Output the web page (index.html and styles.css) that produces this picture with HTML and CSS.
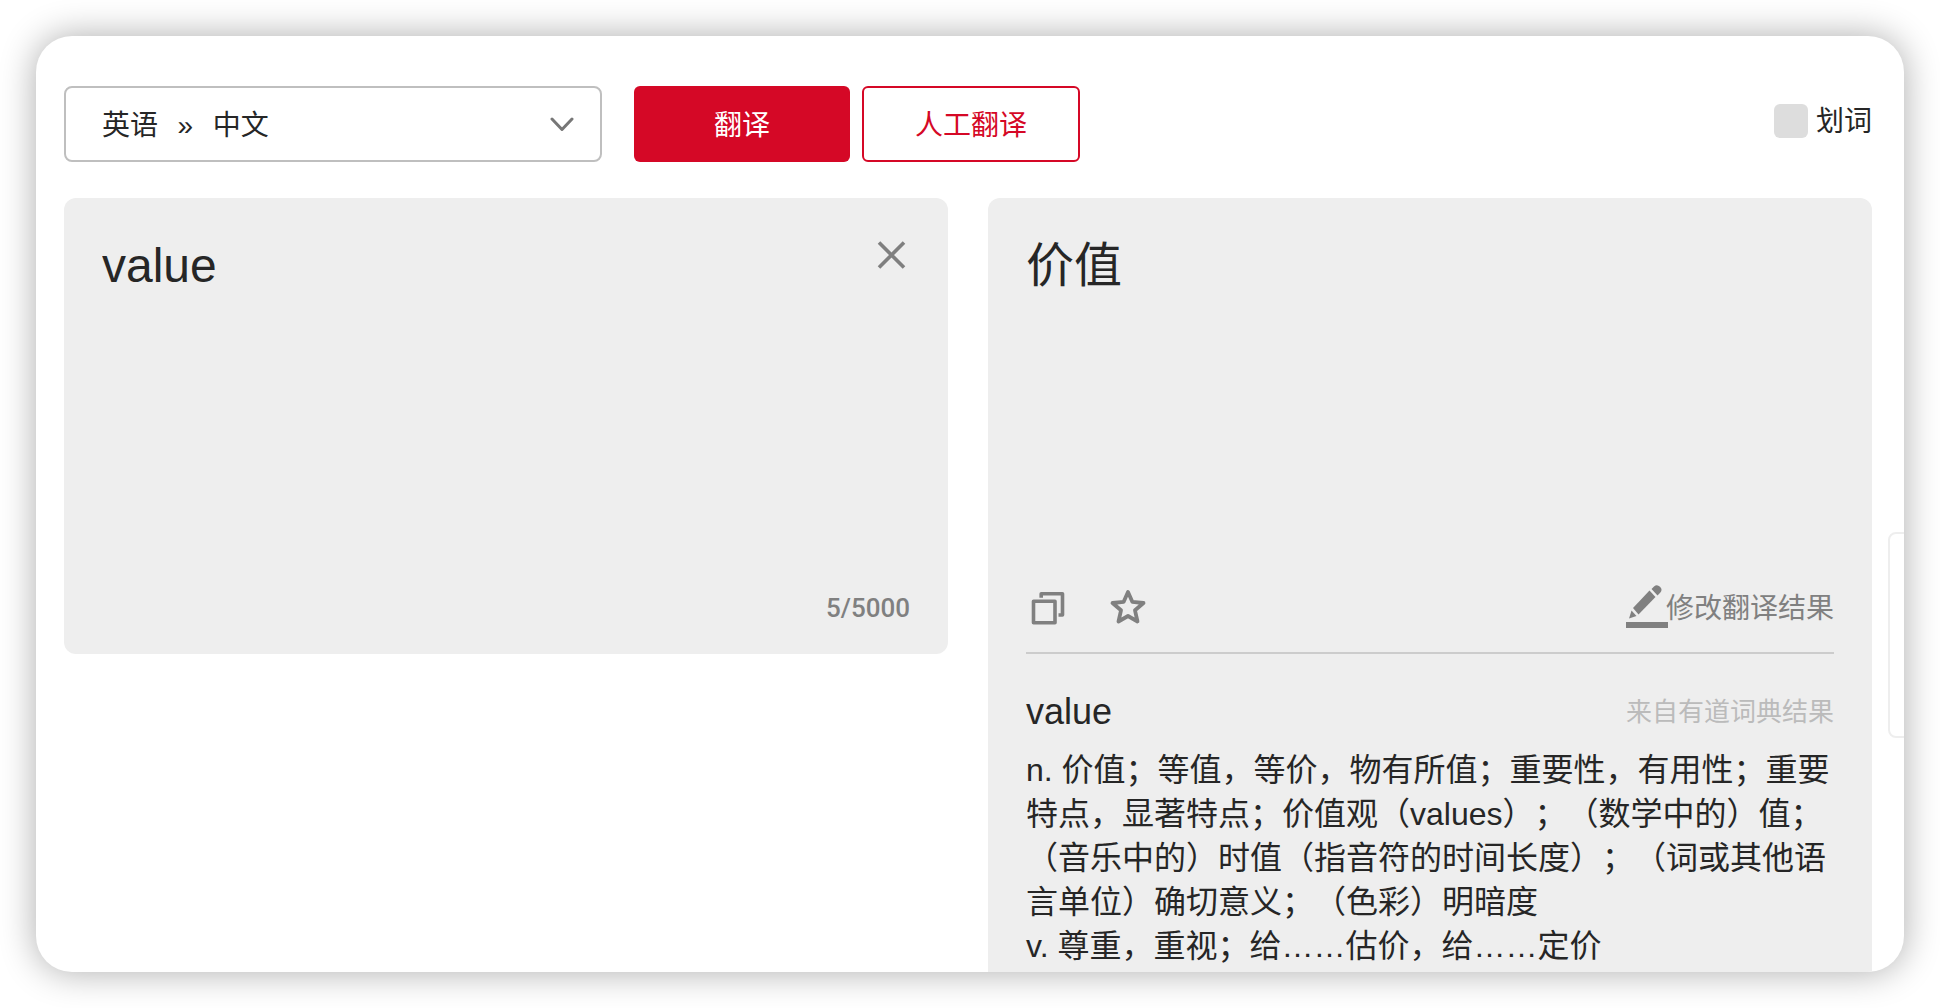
FILE: index.html
```html
<!DOCTYPE html>
<html lang="zh-CN">
<head>
<meta charset="utf-8">
<meta name="viewport" content="width=device-width, initial-scale=1">
<title>翻译</title>
<link rel="stylesheet" href="styles.css">
</head>
<body>
<main class="card">
  <header class="toolbar">
    <div class="lang">
      <select class="lang-select" aria-label="翻译语言">
        <option>英语&ensp;&thinsp;»&ensp;&thinsp;中文</option>
      </select>
      <svg class="lang-arrow" width="24" height="16" viewBox="0 0 24 16" aria-hidden="true"><path d="M2 3l10 10.500L22 3" fill="none" stroke="#777" stroke-width="3" stroke-linecap="round" stroke-linejoin="round"/></svg>
    </div>
    <div class="actions">
      <button class="btn btn-primary" type="button">翻译</button>
      <button class="btn btn-outline" type="button">人工翻译</button>
    </div>
    <label class="pick"><input class="pick-box" type="checkbox"><span class="pick-text">划词</span></label>
  </header>

  <div class="panels">
    <section class="panel source">
      <div class="source-main">
        <textarea class="source-text" aria-label="原文" spellcheck="false">value</textarea>
        <button class="icon-btn" type="button" aria-label="清空">
          <svg width="40" height="40" viewBox="0 0 40 40"><path d="M9 8.500l25 25M34 8.500l-25 25" fill="none" stroke="#7f7f7f" stroke-width="3.600"/></svg>
        </button>
      </div>
      <div class="count">5/5000</div>
    </section>

    <section class="panel target">
      <div class="target-text">价值</div>
      <div class="tools">
        <button class="icon-btn" type="button" aria-label="复制">
          <svg width="44" height="44" viewBox="0 0 44 44"><g fill="none" stroke="#808080" stroke-width="3.600" stroke-linejoin="round"><path d="M7.500 15.200h21.500v21.500H7.500z"/><path d="M15.200 11.800V7.800H36.500V29H32.500"/></g></svg>
        </button>
        <button class="icon-btn" type="button" aria-label="收藏">
          <svg width="44" height="44" viewBox="0 0 44 44"><path d="M22 6l4.300 9.800 11.200 1.200-8.500 7.300 2.500 11.200-9.500-5.500-9.500 5.500 2.500-11.200L6.500 17l11.200-1.200z" fill="none" stroke="#808080" stroke-width="3.800" stroke-linejoin="round"/></svg>
        </button>
        <button class="edit-btn" type="button">
          <svg class="edit-icon" width="42" height="48" viewBox="0 0 42 48" aria-hidden="true"><g fill="#808080"><path d="M0 38h42v6H0z"/><path d="M23.500 6.500l6 6.500L12.500 30.500l-5.500-6.500z"/><path d="M5.500 26.500l5 5.500L3 34.500z"/><path d="M25.500 5l2.500-2.600q3-2.600 6 .3 3 3.100.2 6L31.500 11.500z"/></g></svg>
          <span class="edit-text">修改翻译结果</span>
        </button>
      </div>
      <div class="dict">
        <div class="dict-head">
          <h2 class="dict-word">value</h2>
          <span class="dict-from">来自有道词典结果</span>
        </div>
        <p class="dict-line">n. 价值；等值，等价，物有所值；重要性，有用性；重要特点，显著特点；价值观（values）；（数学中的）值；（音乐中的）时值（指音符的时间长度）；（词或其他语言单位）确切意义；（色彩）明暗度</p>
        <p class="dict-line">v. 尊重，重视；给……估价，给……定价</p>
      </div>
    </section>
  </div>
  <aside class="side-tab" aria-hidden="true"></aside>
</main>
</body>
</html>
```
FILE: styles.css
```css
* {
  box-sizing: border-box;
}

body {
  margin: 0;
  padding: 36px;
  background: #fff;
  color: #262626;
  font-family: "Liberation Sans", "Noto Sans CJK SC", sans-serif;
  font-size: 28px;
  text-spacing-trim: space-all;
}

button,
select,
textarea {
  margin: 0;
  padding: 0;
  border: 0;
  background: none;
  color: inherit;
  font: inherit;
}

svg {
  display: block;
}

.card {
  position: relative;
  overflow: hidden;
  padding: 50px 32px 0 28px;
  border-radius: 36px;
  background: #fff;
  box-shadow: 0 0 36px rgba(0, 0, 0, 0.33);
}

.toolbar {
  display: flex;
  align-items: flex-start;
  gap: 32px;
  margin-bottom: 36px;
}

.lang {
  display: grid;
  align-items: center;
  width: 538px;
}

.lang > * {
  grid-area: 1 / 1;
}

.lang-select {
  appearance: none;
  width: 100%;
  height: 76px;
  padding: 2px 36px 0;
  border: 2px solid #bfbfbf;
  border-radius: 8px;
}

.lang-arrow {
  justify-self: end;
  margin-right: 28px;
  pointer-events: none;
}

.actions {
  display: flex;
  gap: 12px;
}

.btn {
  height: 76px;
  min-width: 216px;
  padding: 0 51px 2px;
  border-radius: 6px;
}

.btn-primary {
  background: #d50826;
  color: #fff;
}

.btn-outline {
  border: 2px solid #d50826;
  color: #d50826;
}

.pick {
  display: flex;
  align-items: center;
  gap: 8px;
  height: 34px;
  margin: 18px 0 0 auto;
}

.pick-box {
  appearance: none;
  width: 34px;
  height: 34px;
  margin: 0;
  border-radius: 6px;
  background: #ddd;
}

.pick-text,
.edit-text {
  padding-bottom: 4px;
}

.panels {
  display: grid;
  grid-template-columns: 1fr 1fr;
  align-items: start;
  gap: 40px;
}

.panel {
  padding: 36px 38px 0;
  border-radius: 12px;
  background: #eee;
}

.source {
  padding-bottom: 22px;
}

.source-main {
  display: flex;
  align-items: flex-start;
}

.source-text,
.target-text {
  height: 350px;
  font-size: 48px;
  line-height: 64px;
}

.source-text {
  flex: 1;
  min-width: 0;
  outline: 0;
  resize: none;
}

.icon-btn {
  flex: none;
}

.count {
  color: #808080;
  font-family: Roboto, sans-serif;
  font-size: 26px;
  font-weight: 500;
  line-height: 48px;
  text-align: right;
}

.target {
  border-radius: 12px 12px 0 0;
  padding-bottom: 4px;
}

.tools {
  display: flex;
  align-items: center;
  gap: 36px;
  padding-bottom: 20px;
  border-bottom: 2px solid #ccc;
}

.edit-btn {
  display: flex;
  align-items: center;
  height: 48px;
  margin-left: auto;
  color: #808080;
}

.edit-icon {
  margin-right: -2px;
}

.dict {
  padding-top: 34px;
}

.dict-head {
  display: flex;
  align-items: center;
  justify-content: space-between;
  margin-bottom: 12px;
}

.dict-word {
  margin: 0;
  font-size: 36px;
  font-weight: 400;
  line-height: 48px;
}

.dict-from {
  color: #bbb;
  font-size: 26px;
  line-height: 48px;
}

.dict-line {
  margin: 0;
  font-size: 32px;
  line-height: 44px;
}

.side-tab {
  position: absolute;
  top: 496px;
  right: -16px;
  width: 32px;
  height: 206px;
  border: 2px solid #eee;
  border-radius: 8px;
  background: #fff;
}
```
